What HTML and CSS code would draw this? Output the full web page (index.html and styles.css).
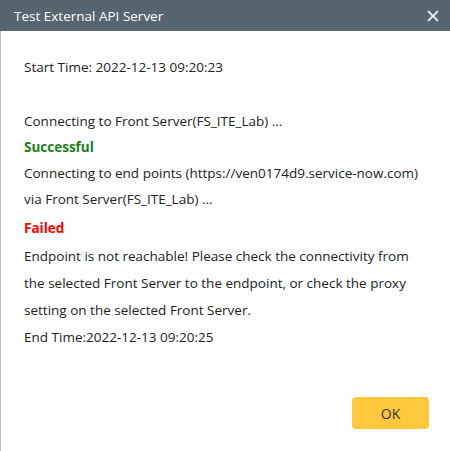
FILE: index.html
```html
<!DOCTYPE html>
<html>
<head>
<meta charset="utf-8">
<link rel="stylesheet" href="styles.css">
</head>
<body>
<div class="dialog">
  <div class="header">
    <span class="title">Test External API Server</span>
    <svg class="close" width="12" height="12" viewBox="0 0 12 12"><path d="M1 1L11 11M11 1L1 11" stroke="#e3e7ea" stroke-width="1.8" fill="none"/></svg>
  </div>
  <div class="content">
    <div class="log">
      <div class="line">Start Time: 2022-12-13 09:20:23</div>
      <div class="line blank"></div>
      <div class="line">Connecting to Front Server(FS_ITE_Lab) ...</div>
      <div class="line ok">Successful</div>
      <div class="line">Connecting to end points (https://ven0174d9.service-now.com)</div>
      <div class="line">via Front Server(FS_ITE_Lab) ...</div>
      <div class="line fail">Failed</div>
      <div class="para">Endpoint is not reachable! Please check the connectivity from the selected Front Server to the endpoint, or check the proxy setting on the selected Front Server.</div>
      <div class="line">End Time:2022-12-13 09:20:25</div>
    </div>
    <div class="footer">
      <button class="btn">OK</button>
    </div>
  </div>
</div>
</body>
</html>
```

FILE: styles.css
```css
html, body {
  margin: 0;
  padding: 0;
  background: #ffffff;
}
.dialog {
  width: 450px;
  height: 451px;
  display: flex;
  flex-direction: column;
  font-family: "Open Sans", "Liberation Sans", sans-serif;
  overflow: hidden;
}
.header {
  height: 31px;
  background: #56656f;
  display: flex;
  align-items: center;
  justify-content: space-between;
  padding: 0 11px 0 14px;
  flex-shrink: 0;
}
.title {
  color: #ffffff;
  font-size: 13.5px;
}
.close {
  display: block;
}
.content {
  flex: 1;
  border-left: 1px solid #b3bcc4;
  display: flex;
  flex-direction: column;
  padding: 23px 21px 0 23px;
}
.log {
  font-size: 13.5px;
  color: #222222;
  flex: 1;
}
.line {
  line-height: 26px;
  height: 26px;
  white-space: nowrap;
}
.blank {
  height: 28px;
}
.ok {
  color: #1a7f1a;
  font-weight: bold;
}
.fail {
  color: #ff0000;
  font-weight: bold;
  line-height: 28px;
  height: 29px;
  margin-top: 2px;
}
.para {
  line-height: 27px;
}
.footer {
  display: flex;
  justify-content: flex-end;
  padding-bottom: 22px;
}
.btn {
  width: 77px;
  height: 32px;
  border: none;
  border-radius: 4px;
  background: #ffc83d;
  color: #333333;
  font-family: "Open Sans", "Liberation Sans", sans-serif;
  font-size: 14px;
  padding: 0;
}
```
